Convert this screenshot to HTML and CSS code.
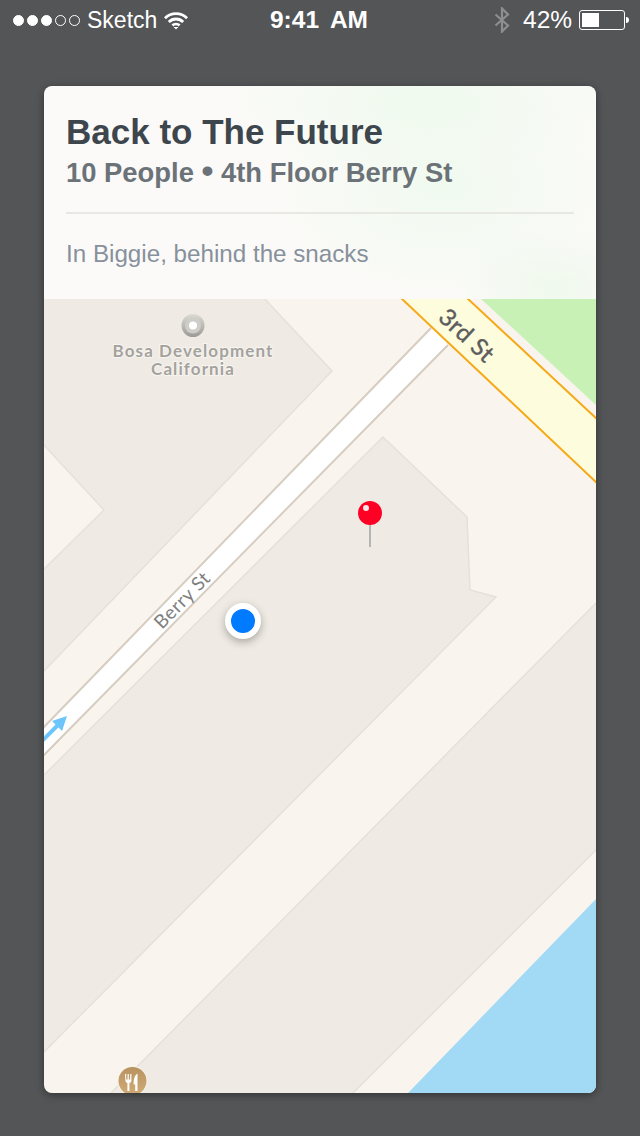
FILE: index.html
```html
<!DOCTYPE html>
<html lang="en">
<head>
    <meta charset="UTF-8">
    <meta name="viewport" content="width=device-width, initial-scale=1.0">
    <title>Back to The Future</title>
    <link rel="stylesheet" href="styles.css">
</head>
<body>
    <div class="status-bar">
        <div class="status-left">
            <span class="signal">
                <i class="dot on"></i><i class="dot on"></i><i class="dot on"></i><i class="dot"></i><i class="dot"></i>
            </span>
            <span class="carrier">Sketch</span>
            <svg class="wifi" width="24" height="19" viewBox="0 0 24 19">
                <path d="M1 7.2C7 1.2 17 1.2 23 7.2" />
                <path d="M4.8 11C8.8 7 15.2 7 19.2 11" />
                <path d="M8.4 14.4C10.4 12.6 13.6 12.6 15.6 14.4" />
                <polygon class="wifi-tip" points="12,18.6 9.600,16 14.400,16" />
            </svg>
        </div>
        <div class="status-time">9:41 AM</div>
        <div class="status-right">
            <svg class="bluetooth" width="16" height="26" viewBox="0 0 16 26">
                <path d="M1.5 7.5L14 18.5L8 24.5V1.5L14 7.5L1.5 18.5" />
            </svg>
            <span class="percent">42%</span>
            <span class="battery"><span class="battery-level"></span></span>
            <span class="battery-nub"></span>
        </div>
    </div>

    <div class="card">
        <header class="card-header">
            <h1>Back to The Future</h1>
            <h2>10 People <span class="bullet">•</span> 4th Floor Berry St</h2>
            <hr>
            <p>In Biggie, behind the snacks</p>
        </header>
        <div class="map">
            <svg class="map-svg" width="552" height="794" viewBox="44 299 552 794">
                <!-- blocks -->
                <polygon class="block" points="43,298 264,298 332,371 44,671 43,671" />
                <polygon class="lot" points="43,444 104,510 43,570" />
                <polygon class="block" points="383,437 467,517 470,590 496,597 44,1052 43,1052 43,776" />
                <polygon class="block" points="597,602 110,1094 352,1094 597,849" />

                <!-- water and park -->
                <polygon class="water" points="597,898 407,1094 597,1094" />
                <polygon class="park" points="480,298 597,298 597,406" />

                <!-- Berry St -->
                <polygon class="road" points="431,328 448,345 44,755 43,755 43,727 44,727" />
                <line class="road-edge" x1="431" y1="328" x2="43" y2="728" />
                <line class="road-edge" x1="448" y1="345" x2="43" y2="756" />
                <polyline class="route-arrow-line" points="42,741 60,723" />
                <polygon class="route-arrow" points="67,716 62,731 52,721" />
                <text class="label-berry" transform="translate(162,630) rotate(-45.5)">Berry St</text>

                <!-- 3rd St -->
                <polygon class="highway" points="401,298 467,298 597,419 597,483" />
                <line class="highway-edge" x1="401" y1="298" x2="597" y2="483" />
                <line class="highway-edge" x1="467" y1="298" x2="597" y2="419" />
                <text class="label-third" transform="translate(437,319) rotate(43)">3rd St</text>

                <!-- places -->
                <defs>
                    <linearGradient id="poiGrey" x1="0" y1="0" x2="0" y2="1">
                        <stop offset="0" stop-color="#dcdad5" />
                        <stop offset="1" stop-color="#9c9a95" />
                    </linearGradient>
                    <linearGradient id="poiFood" x1="0" y1="0" x2="0" y2="1">
                        <stop offset="0" stop-color="#b8935f" />
                        <stop offset="1" stop-color="#d0ab78" />
                    </linearGradient>
                </defs>
                <circle cx="193" cy="325.500" r="11.500" fill="url(#poiGrey)" />
                <circle cx="193" cy="325.500" r="8" fill="#cfcdc8" />
                <circle cx="193" cy="325.500" r="4" fill="#fff" />
                <text class="label-poi" x="193" y="357">Bosa Development</text>
                <text class="label-poi" x="193" y="375">California</text>

                <circle cx="132.500" cy="1081" r="15" fill="#f8f4ed" />
                <circle cx="132.500" cy="1081" r="14" fill="url(#poiFood)" />
                <path class="food" d="M125 1074h1.200v5.500h1.400V1074h1.200v5.500h1.400V1074h1.200v6.500c0 1.500-1 2.300-2 2.600v7.900h-2v-7.900c-1-.3-2-1.100-2-2.600z" />
                <path class="food" d="M137.500 1073.500v17.500h-2.300v-6.500h-1.500c-.4-5 1-9.500 3.800-11z" />

                <!-- pin -->
                <rect class="pin-stem" x="369" y="524" width="2" height="23" />
                <circle class="pin-head" cx="370" cy="513" r="12" />
                <circle cx="366" cy="508" r="3" fill="#fff" opacity="0.9" />
            </svg>
            <span class="location-dot"></span>
        </div>
    </div>
</body>
</html>
```

FILE: styles.css
```css
html, body {
    margin: 0;
    padding: 0;
}
body {
    width: 640px;
    height: 1136px;
    overflow: hidden;
    background-color: #535557;
    font-family: "Liberation Sans", Arial, sans-serif;
}

/* status bar */
.status-bar {
    display: grid;
    grid-template-columns: 1fr auto 1fr;
    align-items: center;
    height: 40px;
    padding: 0 11px 0 13px;
    color: #fff;
}
.status-left, .status-right {
    display: flex;
    align-items: center;
}
.status-right {
    justify-content: flex-end;
}
.signal {
    display: flex;
    gap: 3px;
}
.dot {
    display: block;
    width: 9px;
    height: 9px;
    border: 1px solid #fff;
    border-radius: 50%;
}
.dot.on {
    background-color: #fff;
}
.carrier {
    margin-left: 7px;
    font-size: 23px;
}
.wifi {
    margin-left: 7px;
    fill: none;
    stroke: #fff;
    stroke-width: 2.8;
}
.wifi-tip {
    fill: #fff;
    stroke: none;
}
.status-time {
    margin-right: 4px;
    font-weight: bold;
    font-size: 24.5px;
    word-spacing: 5px;
}
.bluetooth {
    fill: none;
    stroke: #8e8f90;
    stroke-width: 2.2;
}
.percent {
    margin-left: 13px;
    width: 50px;
    font-size: 24.5px;
}
.battery {
    display: block;
    box-sizing: border-box;
    width: 46px;
    height: 20px;
    margin-left: 6px;
    padding: 2px;
    border: 1px solid #fff;
    border-radius: 3px;
}
.battery-level {
    display: block;
    width: 17px;
    height: 14px;
    background-color: #fff;
}
.battery-nub {
    display: block;
    width: 3px;
    height: 6px;
    margin-left: 1px;
    background-color: #fff;
    border-radius: 0 3px 3px 0;
}

/* card */
.card {
    display: flex;
    flex-direction: column;
    width: 552px;
    height: 1007px;
    margin: 46px 0 0 44px;
    overflow: hidden;
    border-radius: 8px;
    box-shadow: 0 2px 8px rgba(0, 0, 0, 0.4);
}
.card-header {
    box-sizing: border-box;
    height: 213px;
    padding: 25px 22px 0;
    background-color: #fbfaf8;
    background-image:
        radial-gradient(ellipse 200px 70px at 380px 15px, #effaee, rgba(239, 250, 238, 0)),
        radial-gradient(ellipse 170px 110px at 400px 100px, #f0faef, rgba(240, 250, 239, 0)),
        radial-gradient(ellipse 100px 60px at 510px 200px, #eff9ed, rgba(239, 249, 237, 0));
}
h1 {
    margin: 0;
    font-size: 35px;
    line-height: 42px;
    font-weight: bold;
    color: #3e464d;
}
h2 {
    margin: 4px 0 0;
    font-size: 27.4px;
    line-height: 32px;
    font-weight: bold;
    color: #6b7278;
}
.bullet {
    font-size: 34px;
    line-height: 1px;
}
hr {
    height: 2px;
    margin: 23px 0 0;
    border: 0;
    background-color: #e8e8e3;
}
p {
    margin: 24px 0 0;
    font-size: 24.2px;
    line-height: 32px;
    color: #87919c;
}

/* map */
.map {
    position: relative;
    flex: 1;
    background-color: #f9f5ee;
}
.map-svg {
    display: block;
}
.block {
    fill: #efebe4;
    stroke: #e5e1da;
    stroke-width: 1.5;
}
.lot {
    fill: #f9f5ee;
    stroke: #e5e1da;
    stroke-width: 1.5;
}
.water {
    fill: #a2daf5;
}
.park {
    fill: #c8f1b5;
}
.road {
    fill: #fff;
}
.road-edge {
    stroke: #d6cdc0;
    stroke-width: 2;
}
.highway {
    fill: #fdfcdc;
}
.highway-edge {
    stroke: #f5a918;
    stroke-width: 2;
}
.route-arrow-line {
    fill: none;
    stroke: #6cc5fb;
    stroke-width: 4;
}
.route-arrow {
    fill: #6cc5fb;
}
.label-berry {
    font-family: Lato, "Open Sans", sans-serif;
    font-size: 19px;
    fill: #808080;
    letter-spacing: 0.5px;
}
.label-third {
    font-family: Lato, "Open Sans", sans-serif;
    font-size: 24px;
    fill: #5c5c5c;
    stroke: #5c5c5c;
    stroke-width: 0.4px;
    letter-spacing: 0.5px;
}
.label-poi {
    font-family: Lato, "Open Sans", sans-serif;
    font-size: 17px;
    font-weight: bold;
    letter-spacing: 1.1px;
    text-anchor: middle;
    fill: #a5a29d;
    stroke: #f7f5f1;
    stroke-width: 2px;
    paint-order: stroke;
}
.food {
    fill: #fff;
}
.pin-stem {
    fill: #b5b5b5;
}
.pin-head {
    fill: #ff0025;
}
.location-dot {
    position: absolute;
    left: 181px;
    top: 304px;
    box-sizing: border-box;
    width: 36px;
    height: 36px;
    background-color: #007aff;
    border: 6px solid #fff;
    border-radius: 50%;
    box-shadow: 0 3px 8px rgba(0, 0, 0, 0.3);
}
```
